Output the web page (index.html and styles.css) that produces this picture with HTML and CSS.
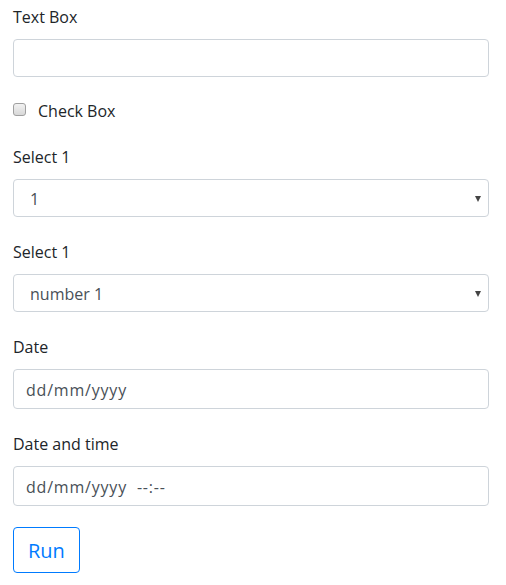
FILE: index.html
```html
<!DOCTYPE html>
<html lang="en">
<head>
<meta charset="utf-8">
<title>Form</title>
<link rel="stylesheet" href="styles.css">
</head>
<body>
<form class="form">
  <div class="group">
    <label class="label" for="tb">Text Box</label>
    <input class="control" id="tb" type="text">
  </div>
  <div class="check">
    <span class="check-box"></span>
    <span class="check-label">Check Box</span>
  </div>
  <div class="group">
    <label class="label" for="s1">Select 1</label>
    <div class="select-wrap">
      <select class="control select" id="s1"><option>1</option><option>2</option></select>
    </div>
  </div>
  <div class="group">
    <label class="label" for="s2">Select 1</label>
    <div class="select-wrap">
      <select class="control select" id="s2"><option>number 1</option><option>number 2</option></select>
    </div>
  </div>
  <div class="group">
    <label class="label" for="d1">Date</label>
    <input class="control date" id="d1" type="text" value="dd/mm/yyyy">
  </div>
  <div class="group group-last">
    <label class="label" for="d2">Date and time</label>
    <input class="control date" id="d2" type="text" value="dd/mm/yyyy  --:--">
  </div>
  <button class="btn" type="button">Run</button>
</form>
</body>
</html>
```
FILE: styles.css
```css
html, body {
  margin: 0;
  padding: 0;
  background: #fff;
}
body {
  font-family: "Open Sans", "Noto Sans", sans-serif;
  font-size: 16px;
  line-height: 24px;
  color: #212529;
}
.form {
  width: 476px;
  padding: 5px 0 0 13px;
  display: flex;
  flex-direction: column;
  align-items: flex-start;
}
.group {
  width: 100%;
  margin-bottom: 23px;
}
.group-last {
  margin-bottom: 21px;
}
.label {
  display: block;
  margin-bottom: 10px;
  line-height: 24px;
}
.control {
  display: block;
  box-sizing: border-box;
  width: 100%;
  height: 38px;
  margin: 0;
  padding: 7px 12px 5px;
  border: 1px solid #ced4da;
  border-radius: 4px;
  background: #fff;
  font: inherit;
  line-height: 24px;
  color: #495057;
  outline: none;
}
.date {
  height: 40px;
  padding-top: 8px;
  padding-bottom: 6px;
  letter-spacing: 0.8px;
}
.select-wrap {
  position: relative;
}
.select {
  -webkit-appearance: none;
  appearance: none;
  padding-left: 16px;
}
.select-wrap::after {
  content: "";
  position: absolute;
  right: 8px;
  top: 17px;
  width: 0;
  height: 0;
  border-left: 3.5px solid transparent;
  border-right: 3.5px solid transparent;
  border-top: 6px solid #444;
  pointer-events: none;
}
.check {
  display: flex;
  align-items: flex-start;
  height: 24px;
  margin: -1px 0 22px;
}
.check-box {
  box-sizing: border-box;
  width: 13px;
  height: 13px;
  margin-top: 4px;
  border: 1px solid #a0a0a0;
  border-radius: 3px;
  background: linear-gradient(#f2f2f2, #d8d8d8);
}
.check-label {
  margin-left: 12px;
  line-height: 24px;
}
.btn {
  box-sizing: border-box;
  height: 46px;
  padding: 2px 14px 0;
  border: 1px solid #007bff;
  border-radius: 4px;
  background: #fff;
  color: #007bff;
  font-family: "Open Sans", "Noto Sans", sans-serif;
  font-size: 20px;
  line-height: 30px;
}
```
